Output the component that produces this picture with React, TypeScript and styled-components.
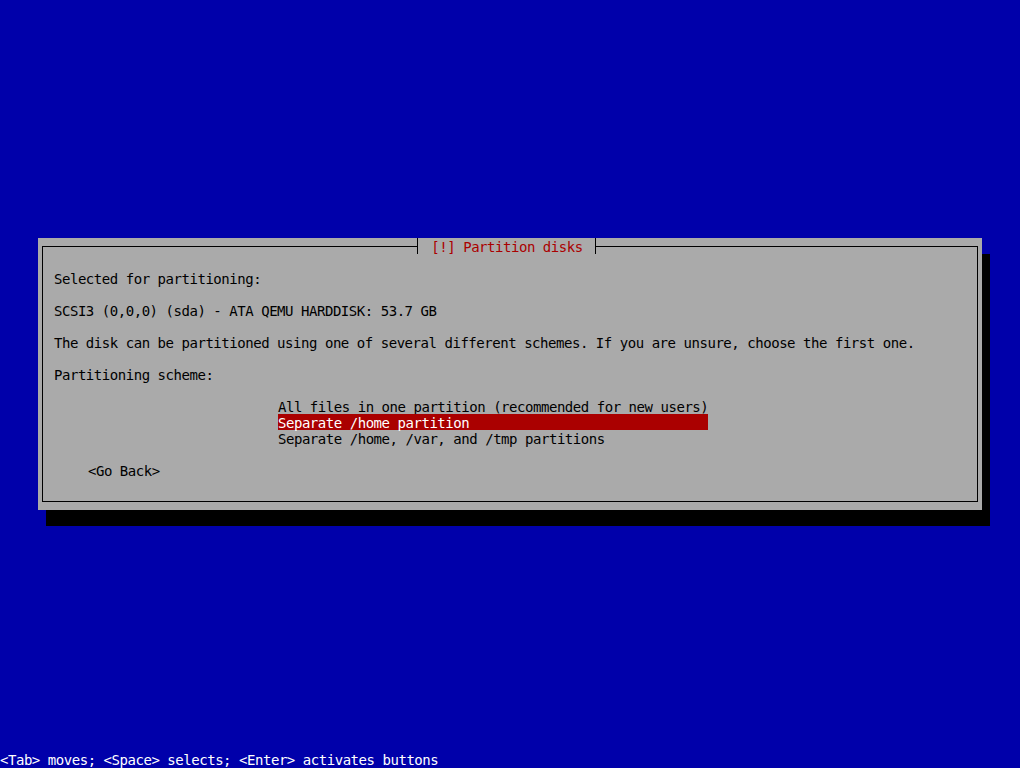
import React from 'react';
import styled, { createGlobalStyle } from 'styled-components';

const GlobalStyle = createGlobalStyle`
  html, body {
    margin: 0;
    padding: 0;
    background: #0000aa;
  }
`;

const Screen = styled.div`
  display: flex;
  flex-direction: column;
  width: 1020px;
  height: 768px;
  overflow: hidden;
  background: #0000aa;
  font-family: "DejaVu Sans Mono", "Liberation Mono", monospace;
  font-size: 14px;
  line-height: 18px;
  letter-spacing: -0.46px;
  white-space: pre;
`;

const Desktop = styled.main`
  flex: 1;
  display: flex;
  align-items: center;
  justify-content: center;
  padding-bottom: 4px;
`;

const Dialog = styled.section`
  display: flex;
  flex-direction: column;
  width: 944px;
  height: 272px;
  background: #aaaaaa;
  box-shadow: 8px 16px 0 #000;
  color: #000;
`;

const Header = styled.header`
  display: flex;
  height: 16px;
  padding: 0 4px;
`;

const Rule = styled.div<{ $side: 'left' | 'right' }>`
  flex: 1 1 ${(p) => (p.$side === 'right' ? '8px' : '0px')};
  align-self: flex-end;
  height: 8px;
  box-sizing: border-box;
  border-top: 1px solid #000;
  border-${(p) => p.$side}: 1px solid #000;
`;

const Tick = styled.span`
  width: 1px;
  height: 16px;
  background: #000;
`;

const Title = styled.h1`
  margin: 0;
  height: 16px;
  padding: 0 12px 0 13px;
  font: inherit;
  color: #aa0000;
`;

const Body = styled.div`
  flex: 1;
  display: flex;
  flex-direction: column;
  align-items: flex-start;
  gap: 16px;
  margin: 0 4px 8px;
  padding: 16px 11px 0;
  border: 1px solid #000;
  border-top: none;
`;

const Line = styled.p`
  margin: 0;
  height: 16px;
`;

const Choices = styled.ul`
  display: flex;
  flex-direction: column;
  margin: 0 0 0 224px;
  padding: 0;
  list-style: none;
`;

const Choice = styled.li<{ $selected?: boolean }>`
  height: 16px;
  background: ${(p) => (p.$selected ? '#aa0000' : 'transparent')};
  color: ${(p) => (p.$selected ? '#ffffff' : '#000')};
`;

const Button = styled.span`
  margin-left: 34px;
  height: 16px;
`;

const HelpLine = styled.footer`
  height: 16px;
  line-height: 16px;
  color: #ffffff;
`;

export default function App() {
  return (
    <>
      <GlobalStyle />
      <Screen>
        <Desktop>
          <Dialog>
            <Header>
              <Rule $side="left" />
              <Tick />
              <Title>[!] Partition disks</Title>
              <Tick />
              <Rule $side="right" />
            </Header>
            <Body>
              <Line>Selected for partitioning:</Line>
              <Line>SCSI3 (0,0,0) (sda) - ATA QEMU HARDDISK: 53.7 GB</Line>
              <Line>
                The disk can be partitioned using one of several different schemes. If you are unsure, choose the first one.
              </Line>
              <Line>Partitioning scheme:</Line>
              <Choices>
                <Choice>All files in one partition (recommended for new users)</Choice>
                <Choice $selected>Separate /home partition</Choice>
                <Choice>Separate /home, /var, and /tmp partitions</Choice>
              </Choices>
              <Button>&lt;Go Back&gt;</Button>
            </Body>
          </Dialog>
        </Desktop>
        <HelpLine>&lt;Tab&gt; moves; &lt;Space&gt; selects; &lt;Enter&gt; activates buttons</HelpLine>
      </Screen>
    </>
  );
}
